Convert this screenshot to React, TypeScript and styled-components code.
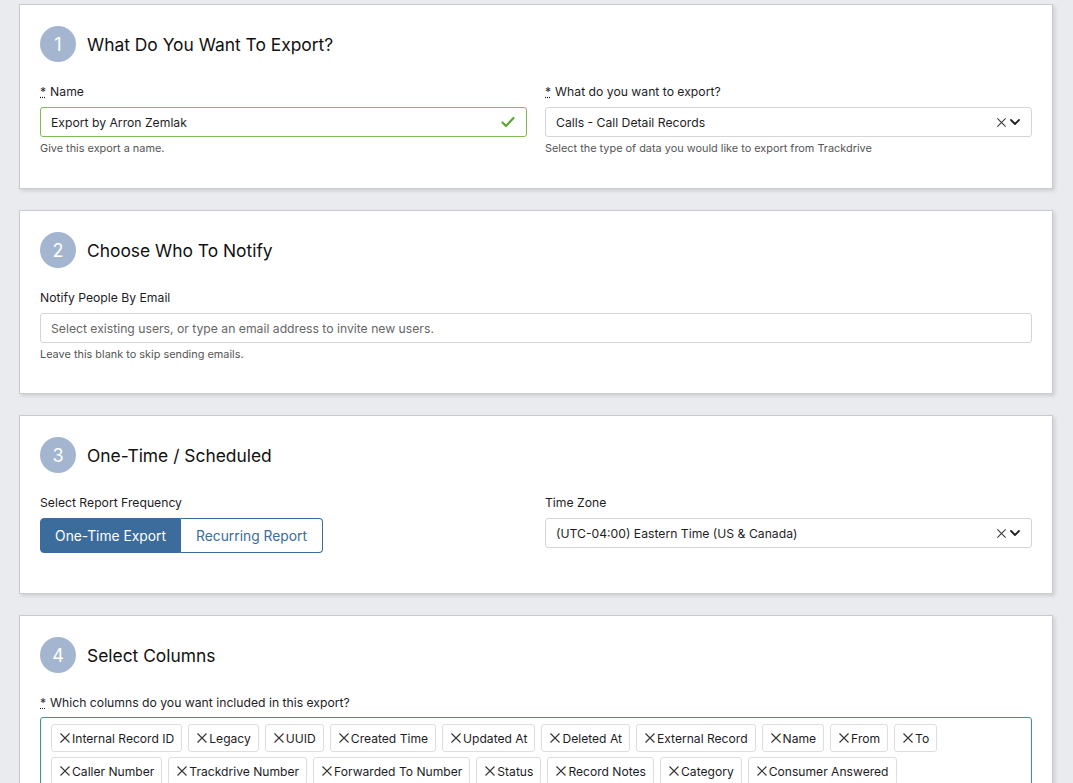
import React from "react";
import styled, { createGlobalStyle } from "styled-components";

const Global = createGlobalStyle`
  html, body { margin: 0; padding: 0; background: #e9ebee; }
  body { font-family: Inter, "Liberation Sans", Arial, sans-serif; color: #1d1d1f; }
  * { box-sizing: border-box; }
`;

const Page = styled.div`
  padding: 4px 20px 0 19px;
  display: flex;
  flex-direction: column;
  gap: 21px;
`;

const Card = styled.section<{ $pb?: number }>`
  background: #fff;
  border: 1px solid #c9cbce;
  box-shadow: 2px 2px 4px rgba(0, 0, 0, 0.12);
  padding: 21px 20px ${(p) => p.$pb ?? 32}px 20px;
`;

const Header = styled.div`
  display: flex;
  align-items: center;
  gap: 11px;
  margin-bottom: 21px;
`;

const Step = styled.div`
  width: 36px;
  height: 36px;
  border-radius: 50%;
  background: #a4b6cf;
  color: #fff;
  font-size: 18px;
  display: flex;
  align-items: center;
  justify-content: center;
`;

const Title = styled.h2`
  margin: 0;
  font-size: 17.4px;
  font-weight: 400;
  color: #111;
`;

const Row = styled.div`
  display: grid;
  grid-template-columns: 1fr 1fr;
  column-gap: 18px;
`;

const Field = styled.div`
  display: flex;
  flex-direction: column;
  align-items: flex-start;
`;

const Label = styled.label<{ $mb?: number }>`
  font-size: 12.2px;
  line-height: 18px;
  color: #1d1d1f;
  margin-bottom: ${(p) => p.$mb ?? 6}px;
`;

const Req = styled.abbr`
  text-decoration: underline dotted;
  margin-right: 4px;
`;

const InputBox = styled.div<{ $ok?: boolean }>`
  width: 100%;
  height: 30px;
  border: 1px solid ${(p) => (p.$ok ? "#7dbb55" : "#d3d5d8")};
  border-radius: 3px;
  display: flex;
  align-items: center;
  padding: 0 10px;
  font-size: 12.2px;
  color: #1d1d1f;
  background: #fff;
`;

const Value = styled.span<{ $placeholder?: boolean }>`
  flex: 1;
  color: ${(p) => (p.$placeholder ? "#666" : "#1d1d1f")};
  white-space: nowrap;
`;

const Help = styled.div`
  margin-top: 3px;
  font-size: 10.9px;
  line-height: 16px;
  color: #555;
`;

const Icons = styled.span`
  display: flex;
  align-items: center;
  gap: 2px;
  color: #333;
`;

const Toggle = styled.div`
  display: flex;
  height: 35px;
`;

const ToggleBtn = styled.button<{ $active?: boolean; $first?: boolean }>`
  font-family: inherit;
  font-size: 13.8px;
  width: ${(p) => (p.$first ? "141px" : "142px")};
  border: 1px solid #3b6c9b;
  background: ${(p) => (p.$active ? "#3b6c9b" : "#fff")};
  color: ${(p) => (p.$active ? "#fff" : "#3b6c9b")};
  border-radius: ${(p) => (p.$first ? "4px 0 0 4px" : "0 4px 4px 0")};
  border-left-width: ${(p) => (p.$first ? "1px" : "0")};
  padding: 0;
`;

const TagBox = styled.div`
  width: 100%;
  border: 1px solid #3f9c72;
  border-radius: 3px;
  padding: 6px 10px;
  display: flex;
  flex-wrap: wrap;
  gap: 5px 6px;
`;

const Tag = styled.span`
  height: 28px;
  border: 1px solid #dcdee1;
  border-radius: 3px;
  padding: 0 7px 0 7px;
  display: inline-flex;
  align-items: center;
  gap: 1px;
  font-size: 12.1px;
  color: #1d1d1f;
`;

const XIcon = ({ size = 12 }: { size?: number }) => (
  <svg width={size} height={size} viewBox="0 0 12 12" fill="none" stroke="#333" strokeWidth="1.1">
    <path d="M1.5 1.5 L10.5 10.5 M10.5 1.5 L1.5 10.5" />
  </svg>
);

const Chevron = () => (
  <svg width="12" height="12" viewBox="0 0 12 12" fill="none" stroke="#222" strokeWidth="1.8" strokeLinecap="round" strokeLinejoin="round">
    <path d="M2 4 L6 8 L10 4" />
  </svg>
);

const Check = () => (
  <svg width="16" height="16" viewBox="0 0 16 16" fill="none" stroke="#5aa832" strokeWidth="2.2" strokeLinecap="round" strokeLinejoin="round">
    <path d="M2.5 8.5 L6 12 L13.5 4" />
  </svg>
);

const columns = [
  "Internal Record ID",
  "Legacy",
  "UUID",
  "Created Time",
  "Updated At",
  "Deleted At",
  "External Record",
  "Name",
  "From",
  "To",
  "Caller Number",
  "Trackdrive Number",
  "Forwarded To Number",
  "Status",
  "Record Notes",
  "Category",
  "Consumer Answered",
];

export default function App() {
  return (
    <>
      <Global />
      <Page>
        <Card>
          <Header>
            <Step>1</Step>
            <Title>What Do You Want To Export?</Title>
          </Header>
          <Row>
            <Field>
              <Label>
                <Req>*</Req>Name
              </Label>
              <InputBox $ok>
                <Value>Export by Arron Zemlak</Value>
                <Check />
              </InputBox>
              <Help>Give this export a name.</Help>
            </Field>
            <Field>
              <Label>
                <Req>*</Req>What do you want to export?
              </Label>
              <InputBox>
                <Value>Calls - Call Detail Records</Value>
                <Icons>
                  <XIcon size={11} />
                  <Chevron />
                </Icons>
              </InputBox>
              <Help>Select the type of data you would like to export from Trackdrive</Help>
            </Field>
          </Row>
        </Card>

        <Card $pb={31}>
          <Header>
            <Step>2</Step>
            <Title>Choose Who To Notify</Title>
          </Header>
          <Field>
            <Label>Notify People By Email</Label>
            <InputBox>
              <Value $placeholder>Select existing users, or type an email address to invite new users.</Value>
            </InputBox>
            <Help>Leave this blank to skip sending emails.</Help>
          </Field>
        </Card>

        <Card $pb={40}>
          <Header>
            <Step>3</Step>
            <Title>One-Time / Scheduled</Title>
          </Header>
          <Row>
            <Field>
              <Label>Select Report Frequency</Label>
              <Toggle>
                <ToggleBtn $active $first>
                  One-Time Export
                </ToggleBtn>
                <ToggleBtn>Recurring Report</ToggleBtn>
              </Toggle>
            </Field>
            <Field>
              <Label>Time Zone</Label>
              <InputBox>
                <Value>(UTC-04:00) Eastern Time (US &amp; Canada)</Value>
                <Icons>
                  <XIcon size={11} />
                  <Chevron />
                </Icons>
              </InputBox>
            </Field>
          </Row>
        </Card>

        <Card>
          <Header>
            <Step>4</Step>
            <Title>Select Columns</Title>
          </Header>
          <Field>
            <Label $mb={5}>
              <Req>*</Req>Which columns do you want included in this export?
            </Label>
            <TagBox>
              {columns.map((c) => (
                <Tag key={c}>
                  <XIcon />
                  {c}
                </Tag>
              ))}
            </TagBox>
          </Field>
        </Card>
      </Page>
    </>
  );
}
